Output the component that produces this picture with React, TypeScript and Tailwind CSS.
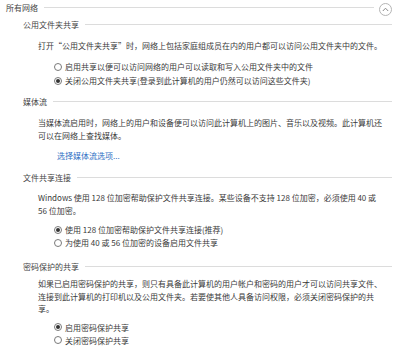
import React from "react";

const font = { fontFamily: '"Noto Sans CJK SC", "Noto Sans", sans-serif' };

function Radio({ checked, label, className = "" }: { checked?: boolean; label: string; className?: string }) {
  return (
    <div className={"flex items-center h-[13px] pl-[54px] " + className}>
      <span className="w-[8px] h-[8px] rounded-full border border-[#7a7a7a] bg-white flex items-center justify-center shrink-0">
        {checked && <span className="w-[4px] h-[4px] rounded-full bg-[#333]" />}
      </span>
      <span className="ml-[3px] whitespace-nowrap">{label}</span>
    </div>
  );
}

function SectionTitle({ title, className = "" }: { title: string; className?: string }) {
  return (
    <div className={"flex items-center h-[13px] pl-[23px] pr-[8px] " + className}>
      <span className="text-[#444] whitespace-nowrap">{title}</span>
      <span className="flex-1 h-px bg-[#dcdcdc] ml-[6px]" />
    </div>
  );
}

function Lines({ lines, className = "" }: { lines: string[]; className?: string }) {
  return (
    <div className={"pl-[38px] whitespace-nowrap " + className}>
      {lines.map((l, i) => (
        <div key={i}>{l}</div>
      ))}
    </div>
  );
}

export default function App() {
  return (
    <div
      className="w-[400px] h-[349px] bg-white overflow-hidden text-[8px] leading-[13px] text-[#3a3a3a]"
      style={font}
    >
      <div className="flex items-center h-[14px] pl-[6px] pr-[8px]">
        <span className="text-[#444] whitespace-nowrap">所有网络</span>
        <span className="flex-1 h-px bg-[#dcdcdc] ml-[6px]" />
        <span className="ml-[5px] mt-[4px] w-[13px] h-[13px] rounded-full border border-[#b5b5b5] flex items-center justify-center">
          <svg width="7" height="5" viewBox="0 0 7 5">
            <path d="M0.8 4 L3.5 1.2 L6.2 4" fill="none" stroke="#8a8a8a" strokeWidth="1" />
          </svg>
        </span>
      </div>

      <SectionTitle title="公用文件夹共享" className="mt-[4px]" />
      <Lines
        className="mt-[8px] pl-[37px]"
        lines={["打开“公用文件夹共享”时，网络上包括家庭组成员在内的用户都可以访问公用文件夹中的文件。"]}
      />
      <Radio className="mt-[8px]" label="启用共享以便可以访问网络的用户可以读取和写入公用文件夹中的文件" />
      <Radio className="mt-[1px]" checked label="关闭公用文件夹共享(登录到此计算机的用户仍然可以访问这些文件夹)" />

      <SectionTitle title="媒体流" className="mt-[8px]" />
      <Lines
        className="mt-[8px]"
        lines={[
          "当媒体流启用时，网络上的用户和设备便可以访问此计算机上的图片、音乐以及视频。此计算机还",
          "可以在网络上查找媒体。",
        ]}
      />
      <p className="pl-[57px] mt-[7px] text-[#2f6fc4]">选择媒体流选项...</p>

      <SectionTitle title="文件共享连接" className="mt-[9px]" />
      <Lines
        className="mt-[7px]"
        lines={["Windows 使用 128 位加密帮助保护文件共享连接。某些设备不支持 128 位加密，必须使用 40 或", "56 位加密。"]}
      />
      <Radio className="mt-[6px]" checked label="使用 128 位加密帮助保护文件共享连接(推荐)" />
      <Radio label="为使用 40 或 56 位加密的设备启用文件共享" />

      <SectionTitle title="密码保护的共享" className="mt-[11px]" />
      <Lines
        className="mt-[5px] leading-[12.5px]"
        lines={[
          "如果已启用密码保护的共享，则只有具备此计算机的用户帐户和密码的用户才可以访问共享文件、",
          "连接到此计算机的打印机以及公用文件夹。若要使其他人具备访问权限，必须关闭密码保护的共",
          "享。",
        ]}
      />
      <Radio className="mt-[5px]" checked label="启用密码保护共享" />
      <Radio label="关闭密码保护共享" />
    </div>
  );
}
